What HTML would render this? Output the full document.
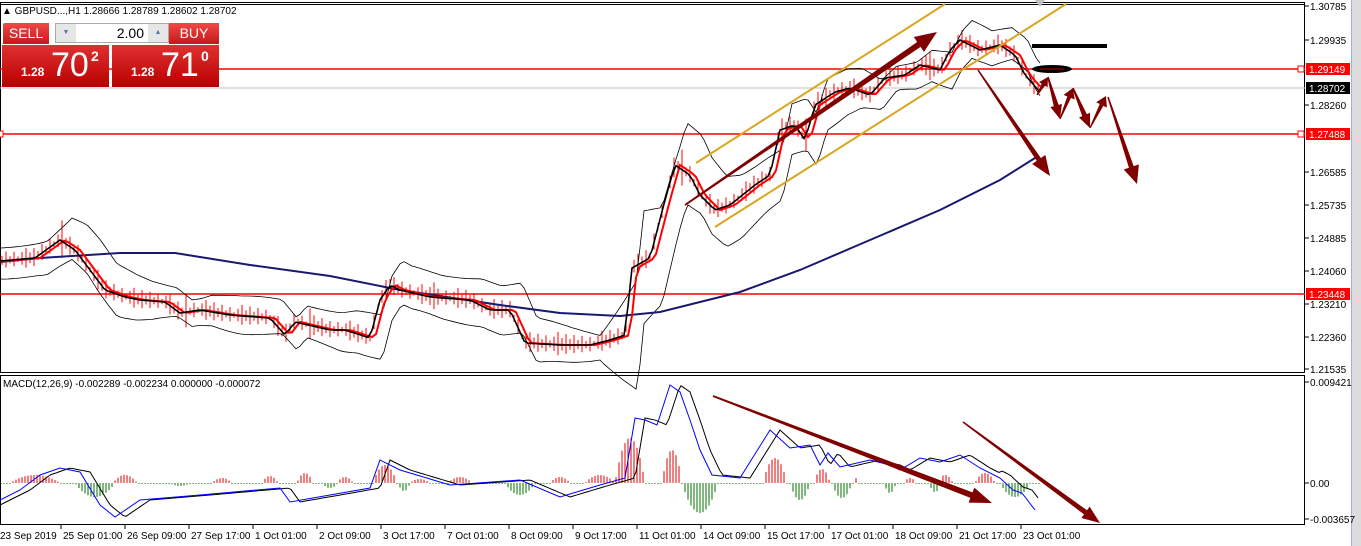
<!DOCTYPE html>
<html><head><meta charset="utf-8">
<style>
body{margin:0;width:1361px;height:546px;overflow:hidden;background:#fff;font-family:"Liberation Sans",sans-serif;}
svg{position:absolute;left:0;top:0}
.t{font-size:10px;fill:#000}
#panel{position:absolute;left:2px;top:22px;width:219px;height:65px;}
.btn{position:absolute;background:linear-gradient(#f04848,#c81818);color:#fff;font-size:14px;text-align:center;line-height:21px;}
.big{position:absolute;top:23px;height:42px;width:107px;background:linear-gradient(#e03030,#b80000);color:#fff;}
</style></head><body>
<svg width="1361" height="546" id="s">
<rect x="1352" y="0" width="9" height="546" fill="#dcdcdc"/>
<line x1="1351.5" y1="0" x2="1351.5" y2="546" stroke="#9fb3d0"/>
<rect x="0.5" y="2.5" width="1304" height="370" fill="none" stroke="#000"/>
<line x1="0" y1="4.5" x2="1305" y2="4.5" stroke="#000"/>
<rect x="0.5" y="375.5" width="1304" height="149" fill="none" stroke="#000"/>
<g class="t">
<text x="2" y="14">▲ GBPUSD...,H1  1.28666 1.28789 1.28602 1.28702</text>
<text x="3" y="387">MACD(12,26,9) -0.002289 -0.002234 0.000000 -0.000072</text>
</g>
<g id="axis"></g>
<line x1="0" y1="88" x2="1305" y2="88" stroke="#c0c0c0"/>
<g stroke="#ff0000" stroke-width="1.6">
<line x1="0" y1="69" x2="1305" y2="69"/><line x1="0" y1="134" x2="1305" y2="134"/><line x1="0" y1="294" x2="1305" y2="294"/>
</g>
<rect x="1298" y="66" width="6" height="6" fill="#fff" stroke="#f00"/>
<rect x="1298" y="131" width="6" height="6" fill="#fff" stroke="#f00"/>
<rect x="-3" y="131" width="6" height="6" fill="#fff" stroke="#f00"/>
<g id="chart"></g>
<g fill="none" stroke="#daa520" stroke-width="2"><line x1="696" y1="163" x2="945" y2="4"/><line x1="715" y1="227" x2="1066" y2="4"/></g>
<polygon points="1035,0 1045,0 1040,7" fill="#c0c0c0"/>
<line x1="1032" y1="46" x2="1107" y2="46" stroke="#000" stroke-width="4"/>
<ellipse cx="1052" cy="69" rx="20" ry="4" fill="#000"/><line x1="1040" y1="69" x2="1064" y2="69" stroke="#b00" stroke-width="1"/>
<g id="arr" fill="#800000"></g>
<g id="labels"></g>
</svg>
<div id="panel">
<div class="btn" style="left:1px;top:1px;width:46px;border-radius:2px 0 0 0">SELL</div>
<div style="position:absolute;left:53px;top:1px;width:114px;height:20px;background:#fff;border:1px solid #aaa;box-sizing:border-box">
<div style="position:absolute;left:0;top:0;width:20px;height:18px;background:#e6e6e6;color:#5677b0;font-size:7px;text-align:center;line-height:18px">▼</div>
<div style="position:absolute;right:24px;top:1px;font-size:14px">2.00</div>
<div style="position:absolute;right:0;top:0;width:20px;height:18px;background:#e6e6e6;color:#5677b0;font-size:7px;text-align:center;line-height:18px">▲</div></div>
<div class="btn" style="left:167px;top:1px;width:50px">BUY</div>
<div class="big" style="left:0"><span style="position:absolute;left:19px;top:20px;font-size:12px;font-weight:bold">1.28</span><span style="position:absolute;left:49px;top:1px;font-size:34px">70</span><span style="position:absolute;left:89px;top:3px;font-size:14px;font-weight:bold">2</span></div>
<div class="big" style="left:110px"><span style="position:absolute;left:19px;top:20px;font-size:12px;font-weight:bold">1.28</span><span style="position:absolute;left:49px;top:1px;font-size:34px">71</span><span style="position:absolute;left:89px;top:3px;font-size:14px;font-weight:bold">0</span></div>
</div>
<script>
var NS="http://www.w3.org/2000/svg";
function el(p,t,a,txt){var e=document.createElementNS(NS,t);for(var k in a)e.setAttribute(k,a[k]);if(txt)e.textContent=txt;document.getElementById(p).appendChild(e);return e;}
function interp(pts,x){for(var i=1;i<pts.length;i++){if(x<=pts[i][0]){var a=pts[i-1],b=pts[i];return a[1]+(b[1]-a[1])*(x-a[0])/(b[0]-a[0]);}}return pts[pts.length-1][1];}
var ax=[["1.30785",6],["1.29935",40],["1.28260",105],["1.26585",172],["1.25735",205],["1.24885",238],["1.24060",271],["1.23210",304],["1.22360",337],["1.21535",369],["0.009421",382],["0.00",483],["-0.003657",519]];
ax.forEach(function(a){el("axis","line",{x1:1305,y1:a[1],x2:1309,y2:a[1],stroke:"#000"});el("axis","text",{x:1310,y:a[1]+4,"class":"t"},a[0]);});
var d=["23 Sep 2019","25 Sep 01:00","26 Sep 09:00","27 Sep 17:00","1 Oct 01:00","2 Oct 09:00","3 Oct 17:00","7 Oct 01:00","8 Oct 09:00","9 Oct 17:00","11 Oct 01:00","14 Oct 09:00","15 Oct 17:00","17 Oct 01:00","18 Oct 09:00","21 Oct 17:00","23 Oct 01:00"];
d.forEach(function(s,i){var x=i*64-3;if(i)el("axis","line",{x1:x,y1:525,x2:x,y2:529,stroke:"#000"});el("axis","text",{x:i?x+2:0,y:539,"class":"t"},s);});
[["1.29149",69,"#f00"],["1.27488",134,"#f00"],["1.23448",294,"#f00"],["1.28702",88,"#000"]].forEach(function(a){el("labels","rect",{x:1306,y:a[1]-6,width:44,height:12,fill:a[2]});el("labels","text",{x:1309,y:a[1]+4,"class":"t",fill:"#fff",style:"fill:#fff"},a[0]);});
var P=[[0,261],[35,258],[60,240],[75,250],[90,270],[105,290],[125,297],[140,300],[165,302],[180,313],[200,310],[230,315],[270,318],[285,335],[295,322],[330,330],[345,330],[370,338],[380,300],[390,285],[400,290],[430,297],[470,300],[490,310],[510,310],[525,343],[560,345],[590,345],[610,340],[625,335],[632,268],[650,258],[665,200],[675,165],[690,175],[700,195],[715,210],[730,205],[755,185],[770,175],[780,130],[795,125],[805,140],[815,105],[835,92],[850,88],[870,95],[885,78],[905,75],[920,65],[940,70],[950,50],[960,40],[980,50],[1000,45],[1015,55],[1025,75],[1040,92]];
var M=[[0,262],[40,258],[120,253],[175,253],[250,265],[330,276],[400,290],[500,305],[560,313],[620,316],[660,312],[740,292],[800,270],[870,240],[940,210],[1000,180],[1035,158]];
function path(pts){return "M"+pts.map(function(p){return p[0]+","+p[1].toFixed(1)}).join(" L");}
var up=[],lo=[],red=[],blk=[];
for(var x=0;x<=1040;x+=4){var y=interp(P,x);var w=interp([[0,14],[100,25],[200,15],[520,25],[600,12],[640,60],[680,40],[760,30],[900,15],[1040,18]],x);up.push([x,interp(P,x-12)-w+Math.sin(x/23)*3]);lo.push([x,interp(P,x-12)+w+Math.cos(x/19)*3]);red.push([x,interp(P,x-5)]);blk.push([x,y]);}
for(var x=2;x<1040;x+=4){var y=interp(P,x);var h=3+((x*37)%9)+((x*13)%31==0?10:0);el("chart","line",{x1:x,y1:y-h,x2:x,y2:y+h*0.8,stroke:(x%8?"#f00":"#00008b"),"stroke-width":1});}
el("chart","path",{d:path(up),fill:"none",stroke:"#000","stroke-width":0.8});
el("chart","path",{d:path(lo),fill:"none",stroke:"#000","stroke-width":0.8});
el("chart","path",{d:path(M),fill:"none",stroke:"#191970","stroke-width":2});
el("chart","path",{d:path(red),fill:"none",stroke:"#f00","stroke-width":2});
el("chart","path",{d:path(blk),fill:"none",stroke:"#000","stroke-width":1.6});
var B=[[35,25,-8],[95,20,14],[125,12,-8],[180,10,3],[222,10,-5],[270,8,-7],[305,8,-10],[345,8,-6],[330,8,5],[385,12,-18],[404,6,8],[420,10,-4],[460,12,-6],[520,15,12],[560,10,-6],[600,15,-8],[630,15,-45],[672,10,-33],[700,18,30],[775,12,-25],[800,10,17],[822,8,-14],[842,10,15],[856,3,-5],[890,6,10],[910,6,-5],[945,8,-8],[935,6,9],[985,10,-10],[1015,15,14]];
for(var x=1;x<1040;x+=3){var h=0;B.forEach(function(b){var t=(x-b[0])/b[1];if(Math.abs(t)<1)h+=b[2]*(1-t*t);});if(Math.abs(h)<0.8)h=h>=0?1:-1;var hh=-h;el("chart","line",{x1:x,y1:483,x2:x,y2:483-hh,stroke:hh>0?"#e00000":"#007000","stroke-width":1});}
var MB=[[0,500],[20,490],[40,475],[60,468],[80,472],[100,505],[115,517],[140,500],[200,495],[280,488],[290,502],[330,495],[370,488],[380,460],[400,470],[450,485],[520,480],[560,497],[600,485],[625,478],[635,418],[645,420],[657,425],[670,385],[680,392],[690,420],[700,450],[712,475],[740,478],[770,430],[790,448],[810,445],[820,465],[828,453],[840,467],[870,460],[890,465],[900,470],[920,458],[940,462],[960,455],[980,468],[1000,478],[1013,490],[1022,493],[1035,510]];
var MK=[];for(var x=0;x<=1040;x+=3)MK.push([x,interp(MB,x-10)+(x>1000?-3:0)]);
el("chart","path",{d:path(MK),fill:"none",stroke:"#000","stroke-width":1});
el("chart","path",{d:path(MB),fill:"none",stroke:"#0000ff","stroke-width":1});
function arrow(x1,y1,x2,y2,w,hw,hl){var dx=x2-x1,dy=y2-y1,L=Math.hypot(dx,dy),ux=dx/L,uy=dy/L,nx=-uy,ny=ux;var bx=x2-ux*hl,by=y2-uy*hl;var p=[[x1+nx*w*0.3,y1+ny*w*0.3],[bx+nx*w,by+ny*w],[bx+nx*hw,by+ny*hw],[x2,y2],[bx-nx*hw,by-ny*hw],[bx-nx*w,by-ny*w],[x1-nx*w*0.3,y1-ny*w*0.3]];el("arr","polygon",{points:p.map(function(q){return q.join(",")}).join(" ")});}
arrow(685,205,937,32,3,9,22);
arrow(978,70,1050,176,2.5,8,20);
arrow(1037,95,1048,77,2,5,9);arrow(1048,77,1060,119,2.5,6,14);arrow(1060,119,1073,88,2,6,10);arrow(1073,88,1090,128,2.5,6,14);arrow(1090,128,1106,96,2,6,10);
arrow(1108,97,1137,184,2.5,8,18);
arrow(713,396,992,503,3,8,22);
arrow(963,422,1100,523,2.5,7,18);
</script>
</body></html>
